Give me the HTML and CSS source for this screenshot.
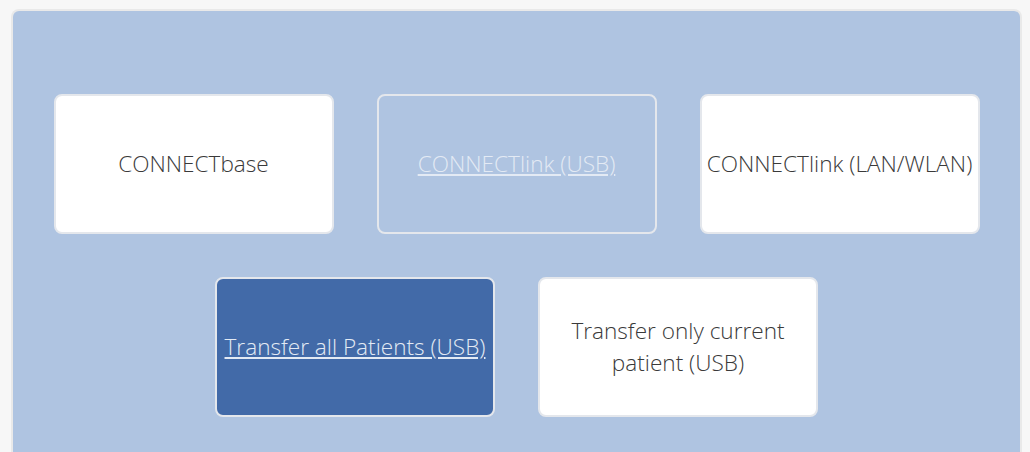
FILE: index.html
```html
<!DOCTYPE html>
<html lang="en">
<head>
  <meta charset="UTF-8" />
  <title>Connect</title>
  <link rel="stylesheet" href="styles.css">
</head>
<body>
  <div class="panel">
    <div class="options">
      <div class="option">CONNECTbase</div>
      <div class="option option-ghost"><a href="#">CONNECTlink (USB)</a></div>
      <div class="option">CONNECTlink (LAN/WLAN)</div>
      <div class="option option-active"><a href="#">Transfer all Patients (USB)</a></div>
      <div class="option">Transfer only current patient (USB)</div>
    </div>
  </div>
</body>
</html>
```

FILE: styles.css
```css
/* Colores principales */
:root {
  --panel-bg: #afc4e1;
  --active-bg: #426aa8;
  --card-border: #e4e7ec;
  --text-color: #3a3a3a;
  --link-color: #e3eaf4;
}

body {
  margin: 0;
  background: #f7f7f7;
  font-family: 'Open Sans', sans-serif;
}

.panel {
  margin: 11px 10px 0 13px;
  height: 460px;
  background: var(--panel-bg);
  border-radius: 6px;
  box-shadow: 0 0 0 2px #e9e9e9;
}

.options {
  display: flex;
  flex-wrap: wrap;
  justify-content: center;
  gap: 43px;
  padding: 83px 40px 0;
}

.option {
  box-sizing: border-box;
  width: 280px;
  height: 140px;
  padding: 0 4px;
  display: flex;
  align-items: center;
  justify-content: center;
  text-align: center;
  background: #fff;
  border: 2px solid var(--card-border);
  border-radius: 8px;
  color: var(--text-color);
  font-size: 22.6px;
  font-weight: 300;
  line-height: 32px;
}

.option a {
  color: var(--link-color);
  text-decoration: underline;
}

.option-ghost {
  background: transparent;
}

.option-active {
  background: var(--active-bg);
}
```
